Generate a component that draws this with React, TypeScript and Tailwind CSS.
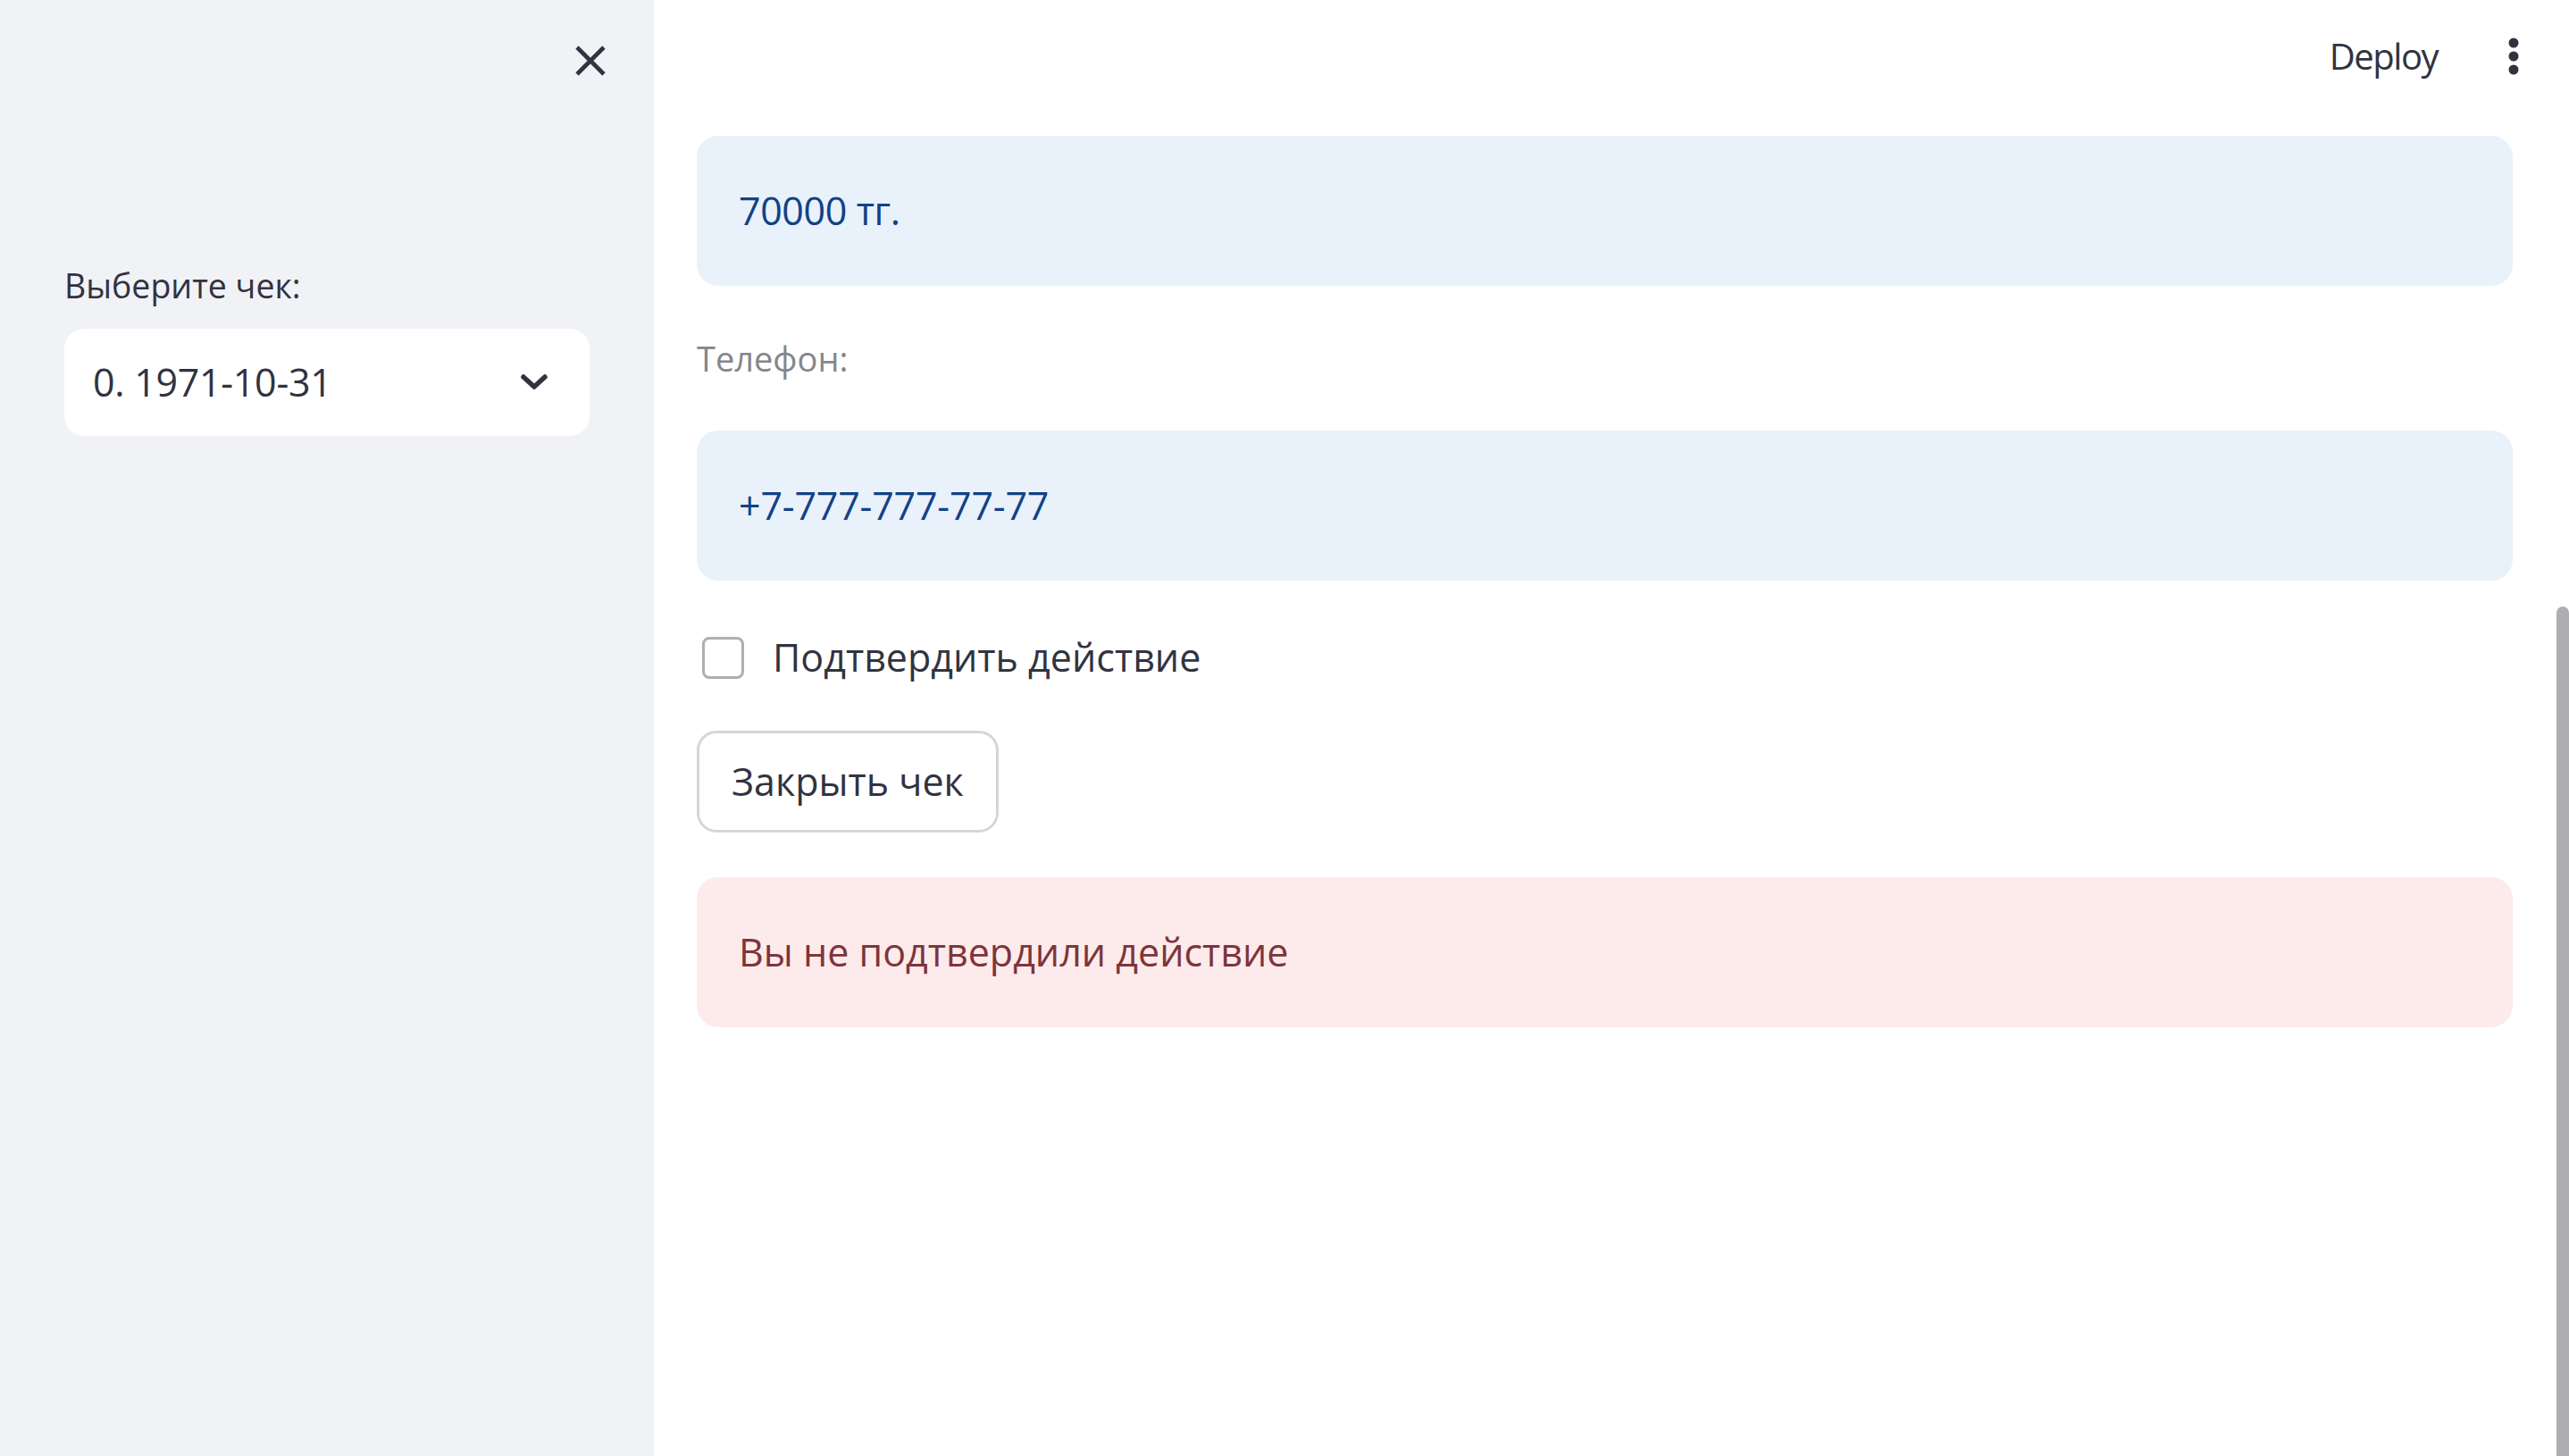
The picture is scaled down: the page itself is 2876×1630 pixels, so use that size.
import React from "react";

const FONT = { fontFamily: '"Open Sans", "Noto Sans", "Liberation Sans", sans-serif' };

function CloseIcon() {
  return (
    <svg width="34" height="34" viewBox="0 0 34 34" fill="none">
      <path d="M2 2 L32 32 M32 2 L2 32" stroke="#31333f" strokeWidth="4.6" strokeLinecap="butt" />
    </svg>
  );
}

function Chevron() {
  return (
    <svg width="32" height="20" viewBox="0 0 32 20" fill="none">
      <path d="M4 4 L16 15 L28 4" stroke="#31333f" strokeWidth="5.5" strokeLinecap="round" strokeLinejoin="round" />
    </svg>
  );
}

function Dots() {
  return (
    <svg width="12" height="42" viewBox="0 0 12 42" fill="#31333f">
      <circle cx="6" cy="6" r="5.5" />
      <circle cx="6" cy="21" r="5.5" />
      <circle cx="6" cy="36" r="5.5" />
    </svg>
  );
}

export default function App() {
  return (
    <div className="relative flex h-[1630px] w-[2876px] overflow-hidden bg-white font-medium text-[#31333f]" style={FONT}>
      {/* Sidebar */}
      <aside className="flex w-[732px] shrink-0 flex-col bg-[#f0f2f6] px-[72px]">
        <div className="-mr-[18px] flex h-[136px] items-center justify-end">
          <CloseIcon />
        </div>
        <div className="mt-[158px] text-[37.5px] leading-[52px]">Выберите чек:</div>
        <div className="mt-[22px] flex h-[120px] items-center justify-between rounded-[22px] bg-white pl-[32px] pr-[46px]">
          <span className="text-[43px] leading-[60px] tracking-[-0.3px]">0. 1971-10-31</span>
          <Chevron />
        </div>
      </aside>

      {/* Main */}
      <main className="flex min-w-0 flex-1 flex-col pl-[48px] pr-[63px]">
        <header className="-mr-[63px] flex h-[152px] items-start justify-end">
          <div className="flex h-[126px] items-center pr-[56px]">
            <span className="text-[40px] leading-[56px] tracking-[-1.5px]">Deploy</span>
            <div className="ml-[79px] flex items-center">
              <Dots />
            </div>
          </div>
        </header>

        <div className="flex h-[168px] items-center rounded-[24px] bg-[#e9f1fb] pl-[47px] text-[43px] leading-[60px] tracking-[-0.4px] text-[#114285]">
          70000 тг.
        </div>

        <div className="mt-[55px] text-[38px] leading-[52px] text-[#85868c]">Телефон:</div>

        <div className="mt-[55px] flex h-[168px] items-center rounded-[24px] bg-[#e9f1fb] pl-[47px] text-[43px] leading-[60px] tracking-[-0.2px] text-[#114285]">
          +7-777-777-77-77
        </div>

        <label className="mt-[58px] flex h-[56px] items-center">
          <span className="ml-[6px] block h-[47px] w-[47px] rounded-[8px] border-[3px] border-[#aeaeb3] bg-white" />
          <span className="ml-[32px] text-[43px] leading-[60px]">Подтвердить действие</span>
        </label>

        <div className="mt-[54px] flex">
          <button className="flex h-[114px] items-center rounded-[22px] border-[3px] border-[#d6d6d9] bg-white px-[36px] text-[43px] font-medium leading-[60px] text-[#31333f]">
            Закрыть чек
          </button>
        </div>

        <div className="mt-[50px] flex h-[168px] items-center rounded-[24px] bg-[#fdebec] pl-[47px] text-[43px] leading-[60px] text-[#7d353b]">
          Вы не подтвердили действие
        </div>
      </main>

      {/* Scrollbar thumb */}
      <div className="absolute bottom-0 right-0 top-[679px] w-[14px] rounded-t-[7px] bg-[#adadb2]" />
    </div>
  );
}
